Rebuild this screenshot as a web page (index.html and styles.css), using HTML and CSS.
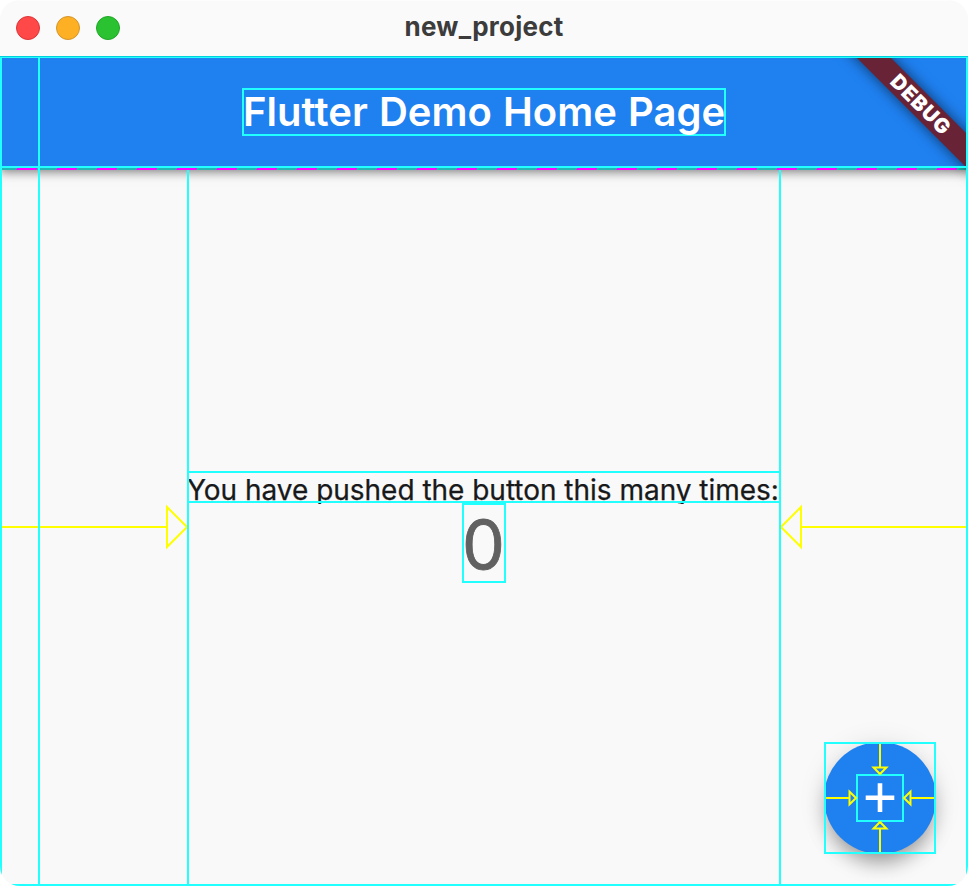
FILE: index.html
```html
<!DOCTYPE html>
<html lang="en">
<head>
<meta charset="utf-8">
<title>new_project</title>
<link rel="stylesheet" href="styles.css">
</head>
<body>
<div class="window">
  <header class="titlebar">
    <div class="lights">
      <span class="light close"></span>
      <span class="light minimize"></span>
      <span class="light zoom"></span>
    </div>
    <div class="window-title">new_project</div>
  </header>
  <div class="app">
    <div class="appbar">
      <h1 class="app-title"><span>Flutter Demo Home Page</span></h1>
    </div>
    <main class="body">
      <svg class="dashes" width="968" height="2" viewBox="0 0 968 2">
        <defs>
          <pattern id="dash" width="40" height="2" patternUnits="userSpaceOnUse">
            <path class="dash" d="M16 2L17.4 0H37.4L36 2Z"/>
          </pattern>
        </defs>
        <rect width="968" height="2" fill="url(#dash)"/>
      </svg>
      <div class="column">
        <div class="message"><span>You have pushed the button this many times:</span></div>
        <div class="count"><span>0</span></div>
      </div>
    </main>
    <button class="fab" aria-label="Increment">
      <svg width="112" height="112" viewBox="0 0 112 112">
        <path class="plus" d="M41.7 55.8H70.3M56 41.2V70"/>
        <path class="box" d="M1 1H111V111H1ZM33 33H79V79H33Z"/>
        <path class="arrow" d="M2 56H25M25.5 49.6V62.4L32 56ZM110 56H87M86.5 49.6V62.4L80 56ZM56 2V25M49.6 25.5H62.4L56 32ZM56 110V87M49.6 86.5H62.4L56 80Z"/>
      </svg>
    </button>
    <div class="ribbon"><span>DEBUG</span></div>
    <svg class="guides" width="968" height="830" viewBox="0 0 968 830">
      <path class="arrow" d="M2 471H167M167 451V491L187 471ZM966 471H801M801 451V491L781 471Z"/>
      <path class="box" d="M1 1H967V829H1ZM0 111H968M39 1V829M188 114V829M780 114V829M188 416H780M188 446H780"/>
      <path class="top-edge" d="M0 .5H968"/>
    </svg>
  </div>
</div>
</body>
</html>
```
FILE: styles.css
```css
* { box-sizing: border-box; }
body { margin: 0; background: #fff; font-family: Inter, "Liberation Sans", sans-serif; }
.window {
  width: 968px; height: 886px; display: flex; flex-direction: column;
  border-radius: 20px; overflow: hidden; background: #f9f9f9;
}
.titlebar {
  height: 56px; display: grid; grid-template-columns: 1fr auto 1fr;
  align-items: center; padding: 0 16px 1px; background: #fafafa;
  border-top: 1px solid #fdfdfd;
}
.lights { display: flex; gap: 16px; }
.light { width: 24px; height: 24px; border-radius: 50%; border: 1px solid; }
.close { background: #ff4848; border-color: #dc3437; }
.minimize { background: #fdb024; border-color: #d3942b; }
.zoom { background: #2bc232; border-color: #20a528; }
.window-title { color: #3c3c3c; font-size: 26px; font-weight: 700; line-height: 52px; letter-spacing: .25px; margin-top: -2px; }
.app { position: relative; flex: 1; display: flex; flex-direction: column; overflow: hidden; }
.appbar {
  height: 112px; display: flex; justify-content: center; align-items: center;
  background: #1f80f0; box-shadow: 0 4px 10px rgba(0,0,0,.5); z-index: 1;
}
.app-title {
  width: 484px; height: 48px; margin: 0; border: 2px solid #21ffff; color: #fff;
  font-size: 40px; font-weight: 560; line-height: 44px; white-space: nowrap;
  letter-spacing: .04px; word-spacing: .9px;
}
.app-title span { margin-left: -1px; }
.body { flex: 1; display: flex; flex-direction: column; align-items: center; }
.dashes { display: block; z-index: 2; background: #28b4b2; }
.dash { fill: #f0f; }
.column { width: 594px; margin-top: 301px; display: flex; flex-direction: column; align-items: center; }
.message {
  width: 594px; height: 33px; overflow: hidden; color: #18191a;
  font-size: 28px; line-height: 38px; white-space: nowrap; letter-spacing: -.02px;
  -webkit-text-stroke: .25px #18191a;
}
.count {
  width: 44px; height: 80px; margin-top: -1px; border: 2px solid #21ffff; color: #616161;
  font-size: 68px; line-height: 79px; display: flex; justify-content: center;
  -webkit-text-stroke: .8px #616161;
}
.count span { margin-left: -1px; }
.fab {
  position: absolute; right: 32px; bottom: 32px; width: 112px; height: 112px; padding: 0;
  border: 0; border-radius: 50%; background: #1f80f0;
  box-shadow: 0 12px 20px -4px rgba(0,0,0,.36), 0 2px 28px rgba(0,0,0,.1);
}
.fab svg { display: block; }
.plus { fill: none; stroke: #fff; stroke-width: 4.6; }
.box { fill: none; stroke: #21ffff; stroke-width: 2; }
.arrow { fill: none; stroke: #ff0; stroke-width: 2; }
.top-edge { stroke: #00cfdc; stroke-width: 1; }
.ribbon {
  position: absolute; z-index: 2; left: 820px; top: 36px; width: 200px; height: 24px;
  transform: rotate(45deg); background: #682337; color: #fff; text-align: center;
  font-size: 20.5px; font-weight: 900; line-height: 24px; letter-spacing: .9px;
  box-shadow: 0 0 14px rgba(0,0,0,.6);
}
.ribbon span { margin-left: 2px; }
.guides { position: absolute; left: 0; top: 0; z-index: 3; pointer-events: none; }
```
